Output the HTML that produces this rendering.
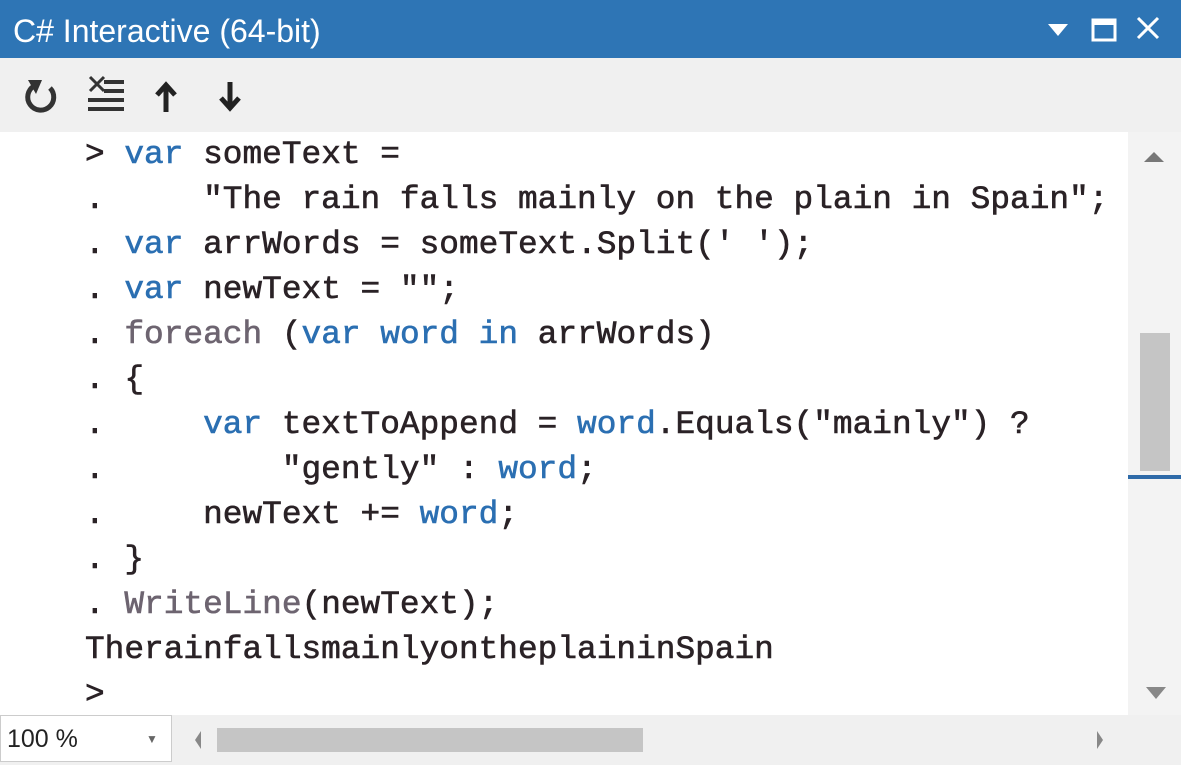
<!DOCTYPE html>
<html><head><style>
body{margin:0;width:1181px;height:765px;overflow:hidden;background:#fff;font-family:"Liberation Sans",sans-serif;position:relative}
.t{position:absolute;left:0;top:0;width:1181px;height:58px;background:#2e75b5;color:#fff;font-size:32px;line-height:62px}
.t span{position:absolute;left:13px}
.tb{position:absolute;left:0;top:58px;width:1181px;height:74px;background:#f0f0f0}
.code{position:absolute;left:85px;top:132px;font-family:"Liberation Mono",monospace;font-size:32.8px;line-height:45px;color:#2a2226;white-space:pre;-webkit-text-stroke:0.6px}
.k{color:#2b6fb2}.g{color:#6d6470}
.vs{position:absolute;left:1128px;top:132px;width:53px;height:583px;background:#f3f3f3}
.bot{position:absolute;left:0;top:715px;width:1181px;height:50px;background:#f0f0f0}
</style></head><body>
<div class="t"><span>C# Interactive (64-bit)</span>
<svg style="position:absolute;left:1040px;top:14px" width="140" height="30">
<polygon points="8,10 28,10 18,22" fill="#fff"/>
<rect x="53" y="6" width="22" height="20" fill="none" stroke="#fff" stroke-width="3"/>
<rect x="53" y="6" width="22" height="5" fill="#fff"/>
<path d="M98 4 L118 24 M118 4 L98 24" stroke="#fff" stroke-width="3"/>
</svg></div>
<div class="tb">
<svg width="260" height="74">
<path d="M34 28 A13 13 0 1 0 50 30" fill="none" stroke="#333" stroke-width="5"/>
<polygon points="28,22 42,22 36,36" fill="#333"/>
<path d="M90 19 L104 33 M104 19 L90 33" stroke="#333" stroke-width="3"/>
<path d="M104 24h20 M104 33h20 M88 42h36 M88 51h36" stroke="#333" stroke-width="4"/>
<path d="M166 54 V28 M157 37 L166 27 L175 37" stroke="#222" stroke-width="5" fill="none"/>
<path d="M230 24 V48 M221 40 L230 50 L239 40" stroke="#222" stroke-width="5" fill="none"/>
</svg></div>
<div class="code">&gt; <span class="k">var</span> someText =
.     "The rain falls mainly on the plain in Spain";
. <span class="k">var</span> arrWords = someText.Split(' ');
. <span class="k">var</span> newText = "";
. <span class="g">foreach</span> (<span class="k">var word in</span> arrWords)
. {
.     <span class="k">var</span> textToAppend = <span class="k">word</span>.Equals("mainly") ?
.         "gently" : <span class="k">word</span>;
.     newText += <span class="k">word</span>;
. }
. <span class="g">WriteLine</span>(newText);
TherainfallsmainlyontheplaininSpain
&gt;</div>
<div class="vs">
<svg width="53" height="583"><polygon points="16,30 36,30 26,20" fill="#777"/>
<rect x="12" y="201" width="30" height="138" fill="#c5c5c5"/>
<rect x="0" y="343" width="53" height="4" fill="#2e6aa8"/>
<polygon points="18,555 38,555 28,567" fill="#888"/></svg></div>
<div class="bot">
<div style="position:absolute;left:0;top:0;width:172px;height:47px;background:#fff;border:1px solid #ccc;font-size:25px;line-height:47px;padding-left:6px;box-sizing:border-box;color:#222">100 %<span style="position:absolute;left:145px;font-size:12px;color:#666">▼</span></div>
<svg style="position:absolute;left:185px;top:0" width="996" height="50">
<polygon points="16,16 10,25 16,34" fill="#888"/>
<rect x="32" y="13" width="426" height="24" fill="#c5c5c5"/>
<polygon points="912,16 918,25 912,34" fill="#888"/></svg></div>
</body></html>
